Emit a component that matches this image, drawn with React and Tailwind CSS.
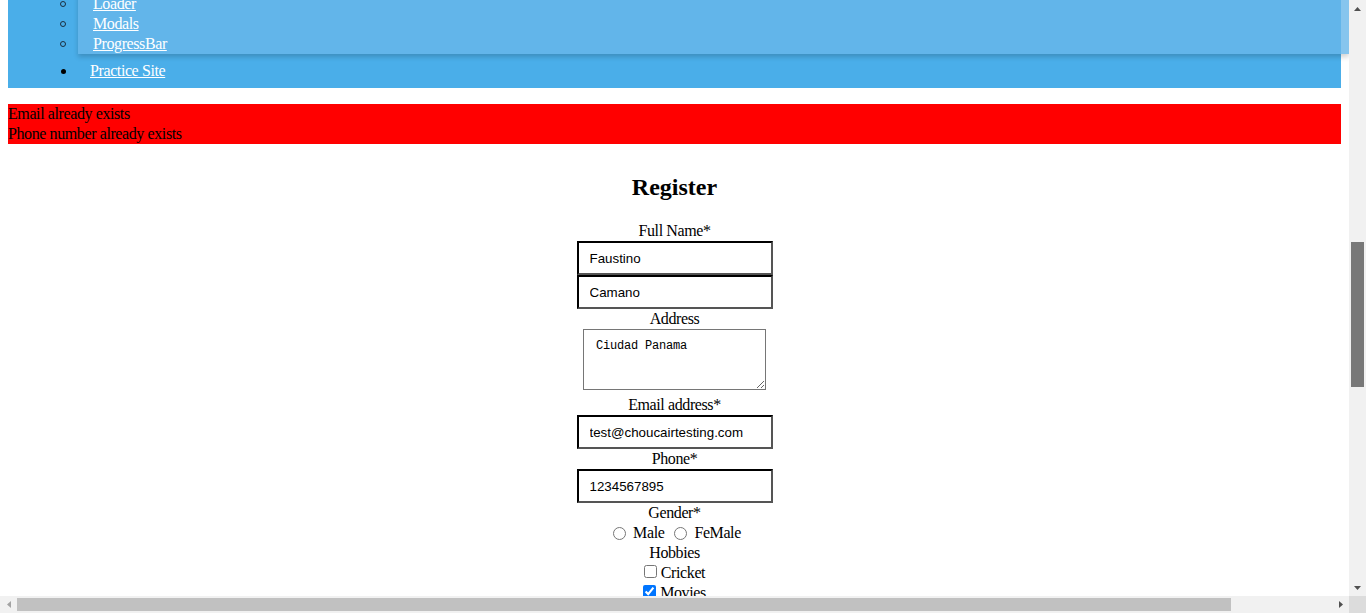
import React from 'react';

const serif = "font-['Liberation_Serif','Times_New_Roman',serif]";

const TextInput = ({ value }) => (
  <input
    type="text"
    readOnly
    value={value}
    className="block w-[196px] h-[34px] border-2 border-t-black border-l-black border-r-[#555] border-b-[#555] bg-white pl-[11px] font-['Liberation_Sans',Arial,sans-serif] text-[13.333px] tracking-normal text-black outline-none"
  />
);

const Label = ({ children }) => <div className="leading-[20px] text-center">{children}</div>;

const Tri = ({ dir, color }) => {
  const pts = {
    up: '0,4 3.5,0 7,4',
    down: '0,0 7,0 3.5,4',
    left: '4,0 4,7 0,3.5',
    right: '0,0 0,7 4,3.5',
  }[dir];
  const vertical = dir === 'up' || dir === 'down';
  return (
    <svg width={vertical ? 7 : 4} height={vertical ? 4 : 7} viewBox={vertical ? '0 0 7 4' : '0 0 4 7'}>
      <polygon points={pts} fill={color} />
    </svg>
  );
};

const App = () => {
  return (
    <div className={`w-[1366px] h-[613px] overflow-hidden flex flex-col bg-white text-[16px] tracking-[-0.4px] text-black ${serif}`}>
      <div className="flex h-[596px]">
        {/* page viewport */}
        <div className="w-[1349px] h-[596px] overflow-hidden">
          <div className="px-2">
            {/* nav */}
            <nav className="relative h-[88px] bg-[#4aaee9] flex flex-col justify-end pb-[7px]">
              <div className="flex items-center h-[20px]">
                <span className="ml-[53px] w-[5px] h-[5px] rounded-full bg-black" />
                <a href="#" className="ml-[24px] text-white underline leading-[20px]">Practice Site</a>
              </div>

              {/* open dropdown */}
              <div className="absolute left-[52px] right-[-8px] top-[-6px] flex">
                <div className="w-[18px] flex flex-col">
                  {[0, 1, 2].map((i) => (
                    <div key={i} className="h-[20px] flex items-center">
                      <span className="w-[6px] h-[6px] rounded-full border border-[#1b2e40]" />
                    </div>
                  ))}
                </div>
                <ul className="flex-1 bg-[rgba(104,183,234,0.8)] shadow-[0_3px_5px_rgba(0,0,0,0.18)] pl-[15px]">
                  {['Loader', 'Modals', 'ProgressBar'].map((t) => (
                    <li key={t} className="h-[20px] leading-[20px]">
                      <a href="#" className="text-white underline">{t}</a>
                    </li>
                  ))}
                </ul>
              </div>
            </nav>

            {/* errors */}
            <div className="mt-4 bg-[#ff0000] leading-[20px]">
              <div>Email already exists</div>
              <div>Phone number already exists</div>
            </div>

            <h2 className="mt-[30px] text-center text-[24px] font-bold leading-[27px] tracking-normal">Register</h2>

            <form className="mt-[20px] flex flex-col items-center">
              <Label>Full Name*</Label>
              <TextInput value="Faustino" />
              <TextInput value="Camano" />
              <Label>Address</Label>
              <textarea
                readOnly
                value="Ciudad Panama"
                className="block w-[183px] h-[61px] border border-[#767676] bg-white pl-[12px] pt-[8px] font-['Liberation_Mono','Courier_New',monospace] text-[12px] tracking-[-0.2px] leading-[16px] text-black outline-none"
              />
              <div className="mt-[5px]">
                <Label>Email address*</Label>
              </div>
              <TextInput value="test@choucairtesting.com" />
              <Label>Phone*</Label>
              <TextInput value="1234567895" />
              <Label>Gender*</Label>
              <div className="h-[20px] flex items-center">
                <label className="flex items-center">
                  <input type="radio" name="g" className="w-[13px] h-[13px] ml-[5px] mr-[7px]" />
                  <span>Male</span>
                </label>
                <label className="flex items-center ml-[5px]">
                  <input type="radio" name="g" className="w-[13px] h-[13px] ml-[5px] mr-[7px]" />
                  <span>FeMale</span>
                </label>
              </div>
              <Label>Hobbies</Label>
              <label className="h-[20px] flex items-center">
                <input type="checkbox" className="w-[13px] h-[13px] mr-[4px] mb-[4px]" />
                <span>Cricket</span>
              </label>
              <label className="h-[20px] flex items-center">
                <input type="checkbox" defaultChecked className="w-[13px] h-[13px] mr-[4px] mb-[4px]" />
                <span>Movies</span>
              </label>
            </form>
          </div>
        </div>

        {/* vertical scrollbar */}
        <div className="w-[17px] bg-[#f1f1f1] flex flex-col items-center">
          <div className="h-[17px] flex items-center justify-center">
            <Tri dir="up" color="#505050" />
          </div>
          <div className="flex-1 w-full px-[2px]">
            <div className="mt-[225px] h-[145px] bg-[#787878]" />
          </div>
          <div className="h-[17px] flex items-center justify-center">
            <Tri dir="down" color="#505050" />
          </div>
        </div>
      </div>

      {/* horizontal scrollbar */}
      <div className="flex h-[17px]">
        <div className="w-[1349px] bg-[#f1f1f1] flex items-center">
          <div className="w-[17px] flex justify-center">
            <Tri dir="left" color="#a3a3a3" />
          </div>
          <div className="flex-1 h-[13px]">
            <div className="w-[1214px] h-full bg-[#c1c1c1]" />
          </div>
          <div className="w-[17px] flex justify-center">
            <Tri dir="right" color="#505050" />
          </div>
        </div>
        <div className="w-[17px] bg-[#dcdcdc]" />
      </div>
    </div>
  );
};

export default App;
